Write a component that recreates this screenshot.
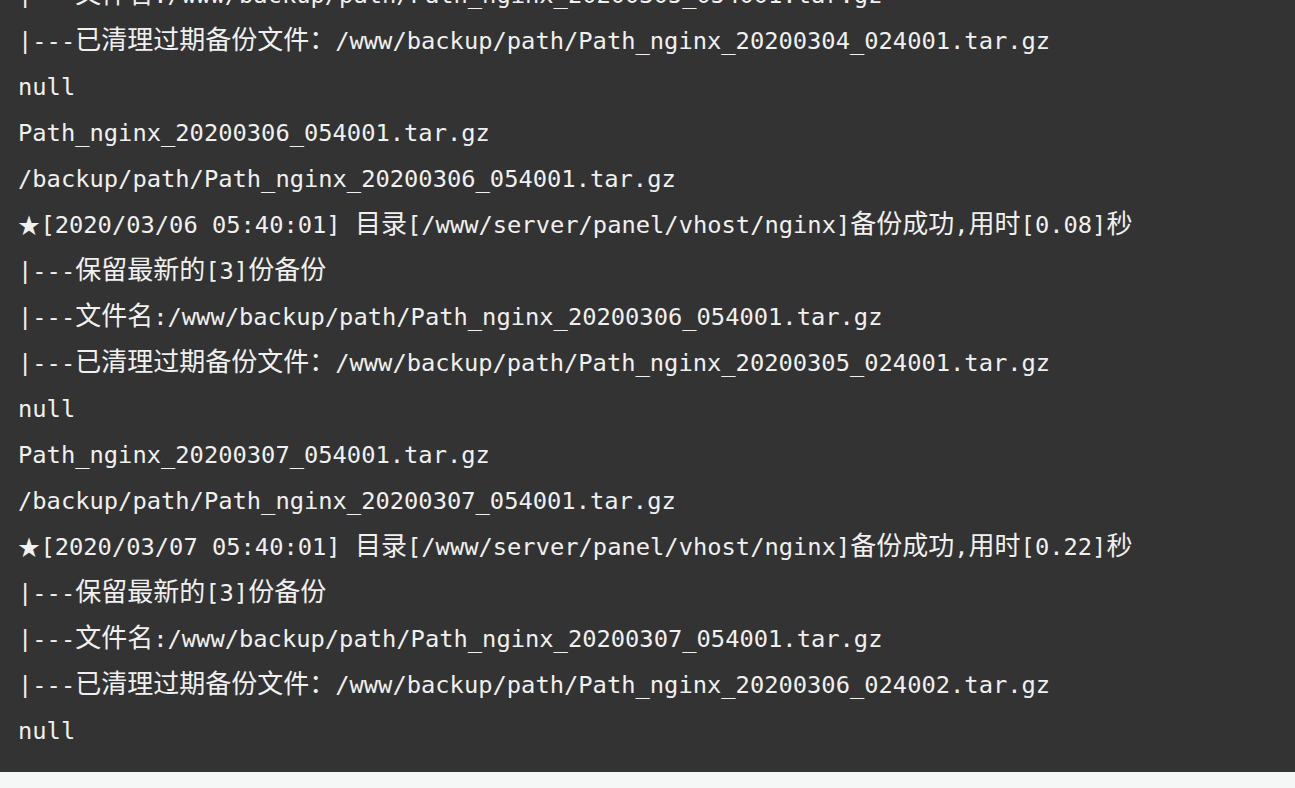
const lines = [
  "|---文件名:/www/backup/path/Path_nginx_20200305_054001.tar.gz",
  "|---已清理过期备份文件：/www/backup/path/Path_nginx_20200304_024001.tar.gz",
  "null",
  "Path_nginx_20200306_054001.tar.gz",
  "/backup/path/Path_nginx_20200306_054001.tar.gz",
  "★[2020/03/06 05:40:01] 目录[/www/server/panel/vhost/nginx]备份成功,用时[0.08]秒",
  "|---保留最新的[3]份备份",
  "|---文件名:/www/backup/path/Path_nginx_20200306_054001.tar.gz",
  "|---已清理过期备份文件：/www/backup/path/Path_nginx_20200305_024001.tar.gz",
  "null",
  "Path_nginx_20200307_054001.tar.gz",
  "/backup/path/Path_nginx_20200307_054001.tar.gz",
  "★[2020/03/07 05:40:01] 目录[/www/server/panel/vhost/nginx]备份成功,用时[0.22]秒",
  "|---保留最新的[3]份备份",
  "|---文件名:/www/backup/path/Path_nginx_20200307_054001.tar.gz",
  "|---已清理过期备份文件：/www/backup/path/Path_nginx_20200306_024002.tar.gz",
  "null",
];

const cjk = "font-['Noto_Sans_CJK_SC',sans-serif] text-[26px] leading-none";

function LogLine({ text }) {
  // split out CJK runs and the star so they get the wider font
  const parts = text.split(/([\u3000-\u9fff\uff00-\uffef]+|★)/).filter(Boolean);
  return (
    <div className="h-[46px] leading-[46px] whitespace-pre">
      {parts.map((p, i) => {
        if (p === "★")
          return (
            <span
              key={i}
              className="inline-block w-[22.4px] font-['Noto_Sans_CJK_SC',sans-serif] text-[22px] leading-none"
            >
              ★
            </span>
          );
        if (/[\u3000-\u9fff\uff00-\uffef]/.test(p))
          return (
            <span key={i} className={cjk}>
              {p}
            </span>
          );
        return <span key={i}>{p}</span>;
      })}
    </div>
  );
}

export default function App() {
  return (
    <div className="h-[788px] overflow-hidden bg-[#f5f6f6]">
      <div className="-mt-[46px] bg-[#333333] px-[18px] py-[18px] text-[#f0f0f0] font-['DejaVu_Sans_Mono',monospace] text-[23.75px]">
        {lines.map((l, i) => (
          <LogLine key={i} text={l} />
        ))}
      </div>
    </div>
  );
}
